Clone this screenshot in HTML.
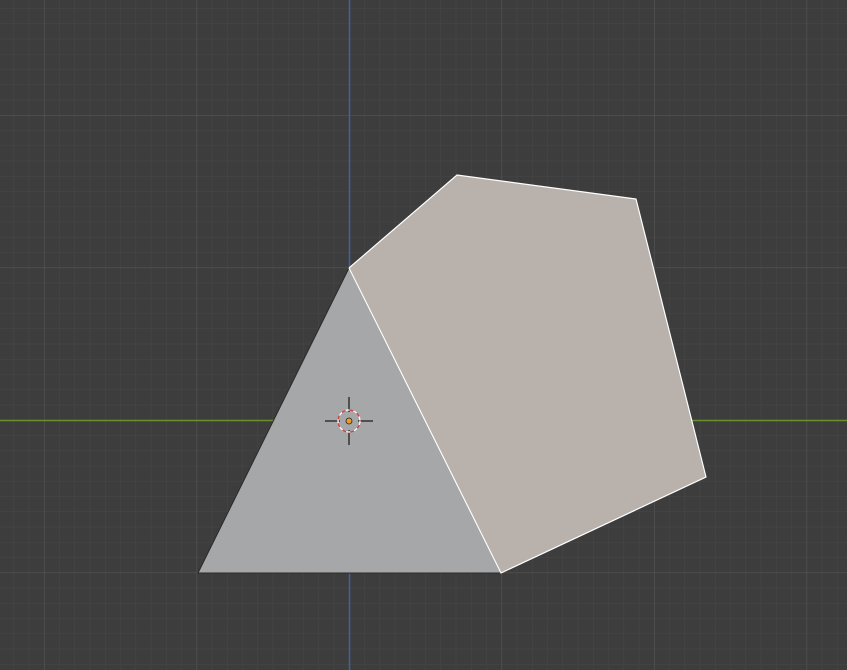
<!DOCTYPE html>
<html><head><style>html,body{margin:0;padding:0;background:#3d3d3d;overflow:hidden}svg{display:block}</style></head>
<body>
<svg width="847" height="670" xmlns="http://www.w3.org/2000/svg">
<defs>
<pattern id="minor" x="349" y="420" width="15.25" height="15.25" patternUnits="userSpaceOnUse">
<path d="M0 0V15.25M0 0H15.25" stroke="#474747" stroke-width="1" fill="none"/>
</pattern>
<pattern id="major" x="349" y="420" width="152.5" height="152.5" patternUnits="userSpaceOnUse">
<path d="M0 0V152.5M0 0H152.5" stroke="#555" stroke-width="1.2" fill="none"/>
</pattern>
</defs>
<rect width="847" height="670" fill="#3d3d3d"/>
<rect width="847" height="670" fill="url(#minor)"/>
<rect width="847" height="670" fill="url(#major)"/>
<line x1="0" y1="420.5" x2="847" y2="420.5" stroke="#6a8f2c" stroke-width="1.5"/>
<line x1="349.5" y1="0" x2="349.5" y2="670" stroke="#3f62a0" stroke-width="1.5"/>
<polygon points="349,268 198,573 501,573" fill="#a6a7a8" stroke="#2a2a2a" stroke-width="1"/>
<polygon points="349,268 457,175 636,199 706,477 501,573" fill="#b9b1ac"/>
<polyline points="349,268 457,175 636,199 706,477 501,573 349,268" fill="none" stroke="#fff" stroke-width="1.2"/>
<g stroke="#333" stroke-width="1.5">
<line x1="325" y1="421" x2="340" y2="421"/><line x1="358" y1="421" x2="373" y2="421"/>
<line x1="349" y1="397" x2="349" y2="412"/><line x1="349" y1="430" x2="349" y2="445"/>
</g>
<circle cx="349" cy="421" r="11" fill="none" stroke="#c44" stroke-width="1.3"/>
<circle cx="349" cy="421" r="11" fill="none" stroke="#fff" stroke-width="1.3" stroke-dasharray="4 4"/>
<circle cx="349" cy="421" r="3" fill="#e89a2c" stroke="#222" stroke-width="0.8"/>
</svg>
</body></html>
